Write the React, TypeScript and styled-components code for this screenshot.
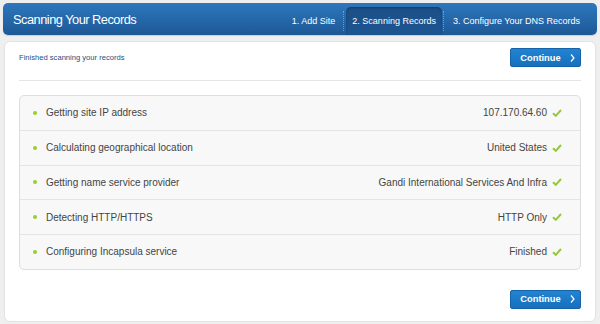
import React from 'react';
import styled, { createGlobalStyle } from 'styled-components';

const GlobalStyle = createGlobalStyle`
  html, body {
    margin: 0;
    padding: 0;
    background: #efefef;
    font-family: "Liberation Sans", Arial, Helvetica, sans-serif;
  }
`;

const Page = styled.div`
  width: 600px;
  height: 324px;
  padding: 3px 3px 0;
  box-sizing: border-box;
  overflow: hidden;
`;

const Header = styled.div`
  height: 32px;
  display: flex;
  align-items: stretch;
  justify-content: space-between;
  padding: 0 10px;
  border-radius: 5px;
  background: linear-gradient(to bottom, #2e77bb 0%, #2466a8 55%, #1e5895 100%);
  box-shadow: 0 1px 1px rgba(0, 0, 0, 0.15);
`;

const Title = styled.h1`
  margin: 0;
  align-self: center;
  color: #fff;
  font-size: 12.8px;
  font-weight: 400;
  letter-spacing: -0.5px;
`;

const Steps = styled.div`
  display: flex;
  align-items: flex-end;
`;

const Step = styled.div<{ $active?: boolean }>`
  height: 28px;
  display: flex;
  align-items: center;
  padding: 0 ${(p) => (p.$active ? 6 : 7)}px;
  color: #fff;
  font-size: 9px;
  border-radius: 5px 5px 0 0;
  background: ${(p) => (p.$active ? 'linear-gradient(to bottom, #1b4f86, #1d5592)' : 'transparent')};
  box-shadow: ${(p) => (p.$active ? 'inset 0 1px 2px rgba(0,0,0,0.25)' : 'none')};
`;

const Sep = styled.span`
  width: 0;
  height: 20px;
  align-self: center;
  margin-top: 4px;
  border-left: 1px dotted rgba(255, 255, 255, 0.35);
  margin-left: 1px;
  margin-right: 2px;
`;

const Card = styled.div`
  margin: 6px 1px 0;
  padding: 6px 14px 12px;
  background: #fff;
  border: 1px solid #e2e2e2;
  border-radius: 6px;
`;

const TopRow = styled.div`
  display: flex;
  justify-content: space-between;
  align-items: center;
  height: 19px;
  padding-bottom: 13px;
  border-bottom: 1px solid #e4e4e4;
`;

const Status = styled.div`
  color: #24507d;
  font-size: 7.6px;
`;

const Button = styled.button`
  width: 71px;
  height: 19px;
  display: flex;
  align-items: center;
  justify-content: center;
  gap: 9px;
  padding: 0 0 0 4px;
  border: 1px solid #1563a8;
  border-radius: 2px;
  background: linear-gradient(to bottom, #2383d2, #1670bd);
  color: #fff;
  font-family: inherit;
  font-size: 9.3px;
  font-weight: 700;
`;

const Chevron = styled.svg`
  width: 5px;
  height: 8px;
`;

const List = styled.div`
  margin-top: 14px;
  border: 1px solid #dedede;
  border-radius: 5px;
  background: #f8f8f8;
  overflow: hidden;
`;

const Row = styled.div`
  height: 33.75px;
  display: flex;
  align-items: center;
  padding: 0 18px 0 12px;
  color: #444;
  font-size: 10px;
  & + & {
    border-top: 1px solid #e4e4e4;
  }
`;

const Dot = styled.span`
  width: 4px;
  height: 4px;
  border-radius: 50%;
  background: #9acd32;
  margin-right: 9px;
  margin-left: 1px;
`;

const Label = styled.span`
  flex: 1;
`;

const Result = styled.span`
  display: flex;
  align-items: center;
  gap: 5px;
`;

const Check = styled.svg`
  width: 10px;
  height: 8px;
`;

const Footer = styled.div`
  display: flex;
  justify-content: flex-end;
  margin-top: 20px;
`;

const rows = [
  ['Getting site IP address', '107.170.64.60'],
  ['Calculating geographical location', 'United States'],
  ['Getting name service provider', 'Gandi International Services And Infra'],
  ['Detecting HTTP/HTTPS', 'HTTP Only'],
  ['Configuring Incapsula service', 'Finished'],
];

const ContinueButton = () => (
  <Button>
    Continue
    <Chevron viewBox="0 0 5 8">
      <path d="M1 0.5 L4 4 L1 7.5" fill="none" stroke="#fff" strokeWidth="1.2" />
    </Chevron>
  </Button>
);

export default function App() {
  return (
    <Page>
      <GlobalStyle />
      <Header>
        <Title>Scanning Your Records</Title>
        <Steps>
          <Step>1. Add Site</Step>
          <Sep />
          <Step $active>2. Scanning Records</Step>
          <Sep />
          <Step>3. Configure Your DNS Records</Step>
        </Steps>
      </Header>
      <Card>
        <TopRow>
          <Status>Finished scanning your records</Status>
          <ContinueButton />
        </TopRow>
        <List>
          {rows.map(([label, value]) => (
            <Row key={label}>
              <Dot />
              <Label>{label}</Label>
              <Result>
                {value}
                <Check viewBox="0 0 10 8">
                  <path d="M1 4.2 L3.8 6.8 L9 1" fill="none" stroke="#94c83a" strokeWidth="2" />
                </Check>
              </Result>
            </Row>
          ))}
        </List>
        <Footer>
          <ContinueButton />
        </Footer>
      </Card>
    </Page>
  );
}
